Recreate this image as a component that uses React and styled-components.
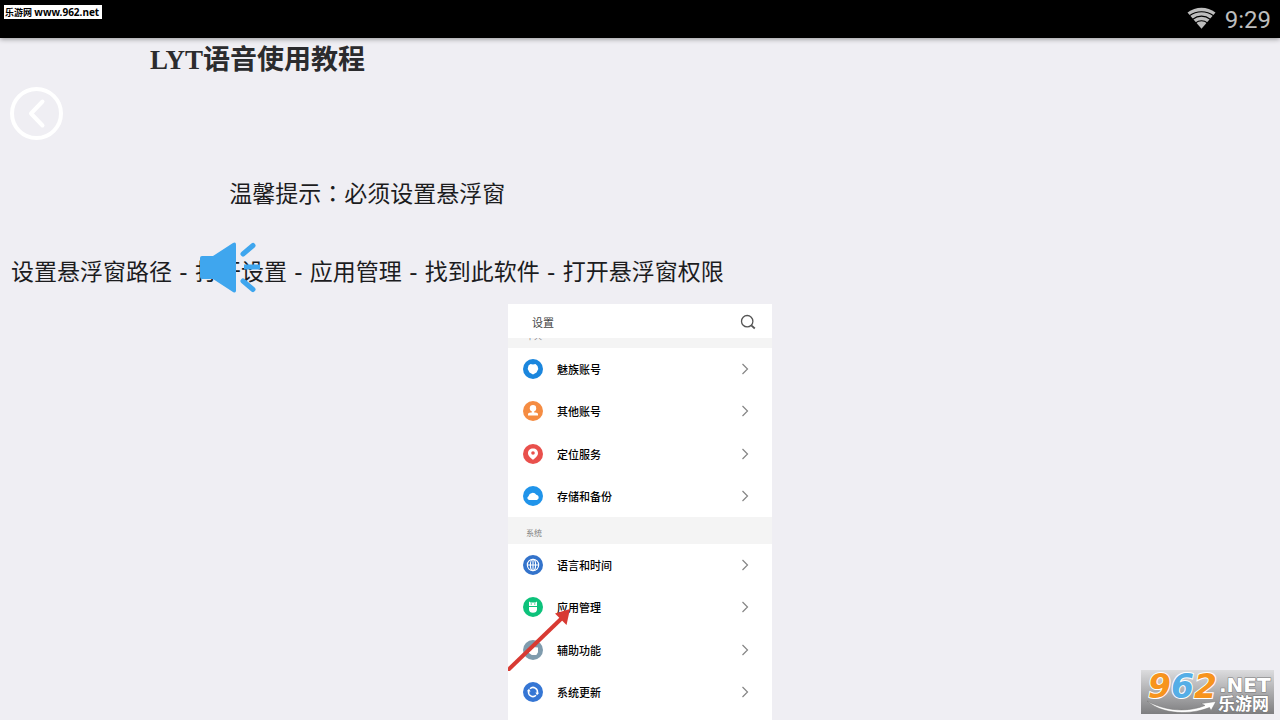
import React from 'react';
import styled, { createGlobalStyle } from 'styled-components';

const BLUE = '#3fa6ee';

const accountItems = [
    { label: '魅族账号', color: '#1b86dd', icon: 'meizu' },
    { label: '其他账号', color: '#f58c42', icon: 'user' },
    { label: '定位服务', color: '#e9504c', icon: 'pin' },
    { label: '存储和备份', color: '#2094ea', icon: 'cloud' },
];

const systemItems = [
    { label: '语言和时间', color: '#3373cb', icon: 'globe' },
    { label: '应用管理', color: '#0dc27b', icon: 'android' },
    { label: '辅助功能', color: '#7f9bad', icon: 'hand' },
    { label: '系统更新', color: '#3576d4', icon: 'update' },
];

const glyphs = {
    meizu: <path fill="#fff" d="M5.500 6.500 7.500 5l2.500.6L12.500 5l2 2 .8 3-1.800 3.500-3.500 2-3.500-2L4.700 10z" />,
    user: (
        <g fill="#fff">
            <circle cx="10" cy="7.300" r="3.200" />
            <path d="M8.800 9.500h2.400v1.900h-2.400zM5 14.500v-1.500c0-1 2-1.800 5-1.800s5 .8 5 1.800v1.500z" />
        </g>
    ),
    pin: (
        <path
            fill="#fff"
            fillRule="evenodd"
            d="M10 4.500c-3 0-5 2-5 4.700 0 2.800 3 4.800 5 6.600 2-1.800 5-3.800 5-6.600 0-2.700-2-4.700-5-4.700zm0 2.700a1.800 1.800 0 1 1 0 3.600 1.800 1.800 0 0 1 0-3.600z"
        />
    ),
    cloud: <path fill="#fff" d="M6.500 14A2 2 0 0 1 5.500 10.200 4.300 4.300 0 0 1 13.300 8.800 2.700 2.700 0 0 1 14 14z" />,
    globe: (
        <g fill="none" stroke="#fff" strokeWidth="1.100">
            <circle cx="10" cy="10" r="5.700" />
            <ellipse cx="10" cy="10" rx="2.600" ry="5.700" />
            <path d="M4.300 10h11.400M10 4.300v11.400" />
        </g>
    ),
    android: (
        <g fill="#fff">
            <path d="M6 4.500 7.500 5.500h5L14 4.500V9H6zM6 10h8v2.500c0 2-1.500 3.300-4 3.300s-4-1.300-4-3.300z" />
            <path fill="#0dc27b" d="M7.700 6.600h1.200v1H7.700zM11.100 6.600h1.200v1h-1.200z" />
        </g>
    ),
    hand: <path fill="#fff" d="M6 9.500 9.500 7l5.500.6v4.700l-1.700 2.800H8.800L6 13z" />,
    update: (
        <g fill="none" stroke="#fff" strokeWidth="1.500">
            <path d="M7 6.700a4.400 4.400 0 0 1 7.300 4.300M13 13.300A4.400 4.400 0 0 1 5.700 9" />
            <path fill="#fff" stroke="none" d="m12.400 10.500 3.800.2-2.200 2.500zM7.600 9.500l-3.800-.2L6 6.800z" />
        </g>
    ),
};

const SettingsGroup = ({ items }) => (
    <Group>
        {items.map((item) => (
            <li key={item.label}>
                <Row type="button">
                    <RowIcon viewBox="0 0 20 20" aria-hidden="true">
                        <circle cx="10" cy="10" r="10" fill={item.color} />
                        {glyphs[item.icon]}
                    </RowIcon>
                    <RowLabel>{item.label}</RowLabel>
                    <Chevron viewBox="0 0 8 12" aria-hidden="true">
                        <path d="m1.500 1 5 5-5 5" />
                    </Chevron>
                </Row>
            </li>
        ))}
    </Group>
);

const App = () => (
    <Page>
        <GlobalStyle />
        <StatusBar>
            <SiteTag>
                乐游网 <SiteUrl>www.962.net</SiteUrl>
            </SiteTag>
            <StatusInfo>
                <Wifi viewBox="0 0 30 22" aria-hidden="true">
                    <path d="M15 22 .5 5.300C9 -1.200 21 -1.200 29.500 5.300z" fill="#bdbdbd" />
                    <g fill="none" stroke="#000" strokeWidth="1.200">
                        <path d="M2.500 8.600c7.500-5.400 17.500-5.400 25 0" />
                        <path d="M5.500 12.500c6-4.300 13-4.300 19 0" />
                        <path d="M8.500 16.300c4-3 9-3 13 0" />
                    </g>
                </Wifi>
                <Clock>9:29</Clock>
            </StatusInfo>
        </StatusBar>

        <Title>LYT语音使用教程</Title>
        <BackButton type="button" aria-label="返回">
            <svg viewBox="0 0 53 53" width="53" height="53" fill="none" stroke="#fff" strokeWidth="4">
                <circle cx="26.500" cy="26.500" r="24.500" />
                <path d="M32.500 14.500 21 26.500l11.500 12" strokeLinecap="round" strokeLinejoin="round" />
            </svg>
        </BackButton>

        <Guide>
            <GuideText>
                温馨提示<Colon>：</Colon>必须设置悬浮窗
            </GuideText>
            <GuideText>设置悬浮窗路径 - 打开设置 - 应用管理 - 找到此软件 - 打开悬浮窗权限</GuideText>
            <SpeakerButton type="button" aria-label="语音">
                <svg viewBox="0 0 64 54" width="64" height="54">
                    <path
                        d="M4 16h11L35 3q3-1.500 3 1.500v46q0 3-3 1.500L15 39H4q-2 0-2-2V18q0-2 2-2z"
                        fill={BLUE}
                    />
                    <g stroke={BLUE} strokeWidth="5" strokeLinecap="round">
                        <path d="m45 14 10-8.500M45 41l10 8.500" />
                        <path d="M46 27h16" strokeLinecap="butt" />
                    </g>
                </svg>
            </SpeakerButton>
        </Guide>

        <Phone>
            <PhoneHeader>
                <span>设置</span>
                <SearchButton type="button" aria-label="搜索">
                    <svg viewBox="0 0 16 16" width="16" height="16" fill="none" stroke="#555">
                        <circle cx="7.200" cy="7.200" r="5.700" strokeWidth="1.300" />
                        <path d="m11.300 11.300 3.500 3.200" strokeWidth="1.800" />
                    </svg>
                </SearchButton>
            </PhoneHeader>
            <SectionLabel $tucked>个人</SectionLabel>
            <SettingsGroup items={accountItems} />
            <SectionLabel>系统</SectionLabel>
            <SettingsGroup items={systemItems} />
            <Arrow viewBox="0 0 64 64" aria-hidden="true">
                <path d="M-2 65 54 11" stroke="#d83a33" strokeWidth="4" />
                <path d="M62 2 47 6.500 58.500 18z" fill="#d83a33" />
            </Arrow>
        </Phone>

        <Watermark viewBox="0 0 133 44" role="img" aria-label="962.NET 乐游网">
            <defs>
                <linearGradient id="plate" x1="0" y1="0" x2="0" y2="1">
                    <stop offset="0" stopColor="#dcdcde" />
                    <stop offset="1" stopColor="#7e7e80" />
                </linearGradient>
            </defs>
            <rect width="133" height="44" fill="url(#plate)" />
            <BigDigits x="7" y="28">
                <tspan fill="#f7941d">9</tspan>
                <tspan fill="#55aee6">6</tspan>
                <tspan fill="#f7941d">2</tspan>
            </BigDigits>
            <path
                d="M6 31c20 11 42 11 58 4.500l-4-2 15-2-5 9-1.500-3C50 45 22 45 6 31z"
                fill="#fff"
                stroke="#777"
                strokeWidth="0.500"
            />
            <MarkText x="78" y="22" $size={20}>.NET</MarkText>
            <MarkText x="77" y="40" $size={17}>乐游网</MarkText>
        </Watermark>
    </Page>
);

export default App;

const GlobalStyle = createGlobalStyle`
    * {
        box-sizing: border-box;
    }
    body {
        margin: 0;
        background: #efeef3;
    }
    button {
        padding: 0;
        border: 0;
        background: none;
        font: inherit;
        color: inherit;
        cursor: pointer;
    }
    svg {
        display: block;
    }
`

const Page = styled.div`
    position: relative;
    display: flex;
    flex-direction: column;
    align-items: flex-start;
    height: 100vh;
    overflow: hidden;
    color: #1c1c1e;
    font-family: "DejaVu Sans", "Noto Sans CJK SC", sans-serif;
`

const StatusBar = styled.header`
    display: flex;
    flex: none;
    align-items: flex-start;
    justify-content: space-between;
    align-self: stretch;
    height: 38px;
    padding: 5px 9px 0 4px;
    background: #000;
    box-shadow: 0 1px 5px rgba(0, 0, 0, 0.4);
`

const SiteTag = styled.div`
    height: 14px;
    padding: 0 3px 0 1px;
    background: #fff;
    color: #000;
    font: bold 9px/15px "Noto Sans", "Noto Sans CJK SC", sans-serif;
    white-space: nowrap;
`

const SiteUrl = styled.span`
    font-size: 10px;
`

const StatusInfo = styled.div`
    display: flex;
    align-items: flex-start;
    gap: 9px;
    padding-top: 2px;
    color: #bdbdbd;
`

const Wifi = styled.svg`
    width: 29px;
    height: 22px;
`

const Clock = styled.time`
    font: 24px/26px Roboto, sans-serif;
`

const Title = styled.h1`
    flex: none;
    margin: 0 0 5px 150px;
    color: #2b2b2d;
    font: bold 27px/44px "Liberation Serif", "Noto Sans CJK SC", serif;
`

const BackButton = styled.button`
    flex: none;
    margin-left: 10px;
    border-radius: 50%;
`

const Guide = styled.section`
    position: relative;
    display: flex;
    flex: none;
    flex-direction: column;
    align-items: center;
    gap: 46px;
    margin: 36px 0 16px 11px;
`

const GuideText = styled.p`
    margin: 0;
    font-size: 23px;
    line-height: 32px;
    white-space: nowrap;
`

const Colon = styled.span`
    font-family: "Noto Sans CJK TC", sans-serif;
`

/* floats above the guide text */
const SpeakerButton = styled.button`
    position: absolute;
    left: 187px;
    bottom: -6px;
`

const Phone = styled.section`
    position: relative;
    display: flex;
    flex: 1 0 auto;
    flex-direction: column;
    align-self: center;
    width: 264px;
    background: #fff;
    color: #000;
    font-family: "Noto Sans CJK SC", sans-serif;
`

const PhoneHeader = styled.div`
    position: relative;
    z-index: 1;
    display: flex;
    align-items: center;
    justify-content: space-between;
    height: 34px;
    padding: 2px 16px 0 24px;
    background: #fff;
    color: #444;
    font-size: 11px;
`

const SearchButton = styled.button`
    flex: none;
`

const SectionLabel = styled.div`
    height: 27px;
    margin-top: ${(props) => (props.$tucked ? '-17px' : '0')};
    padding: 4px 18px 0;
    background: #f4f4f4;
    color: #808080;
    font-size: 8px;
    line-height: 23px;
`

const Group = styled.ul`
    display: grid;
    grid-auto-rows: 1fr;
    min-height: 169px;
    margin: 0;
    padding: 0;
    list-style: none;
`

const Row = styled.button`
    display: flex;
    align-items: center;
    width: 100%;
    height: 100%;
    padding: 0 23px 0 15px;
    text-align: left;
`

const RowIcon = styled.svg`
    flex: none;
    width: 20px;
    height: 20px;
    margin-right: 14px;
`

const RowLabel = styled.span`
    flex: 1;
    font-size: 11px;
    font-weight: 500;
    line-height: 16px;
`

const Chevron = styled.svg`
    width: 8px;
    height: 12px;
    fill: none;
    stroke: #858585;
    stroke-width: 1.2;
`

/* points at the app management row */
const Arrow = styled.svg`
    position: absolute;
    top: 303px;
    left: 0;
    width: 64px;
    height: 64px;
`

const Watermark = styled.svg`
    position: absolute;
    right: 6px;
    bottom: 6px;
    width: 133px;
    height: 44px;
    overflow: visible;
`

const BigDigits = styled.text`
    font: italic bold 33px "DejaVu Sans", sans-serif;
    stroke: #fff;
    stroke-width: 2;
    paint-order: stroke;
`

const MarkText = styled.text`
    font: bold ${(props) => props.$size}px "DejaVu Sans", "Noto Sans CJK SC", sans-serif;
    fill: #fff;
    stroke: #777;
    stroke-width: 1;
    paint-order: stroke;
`
